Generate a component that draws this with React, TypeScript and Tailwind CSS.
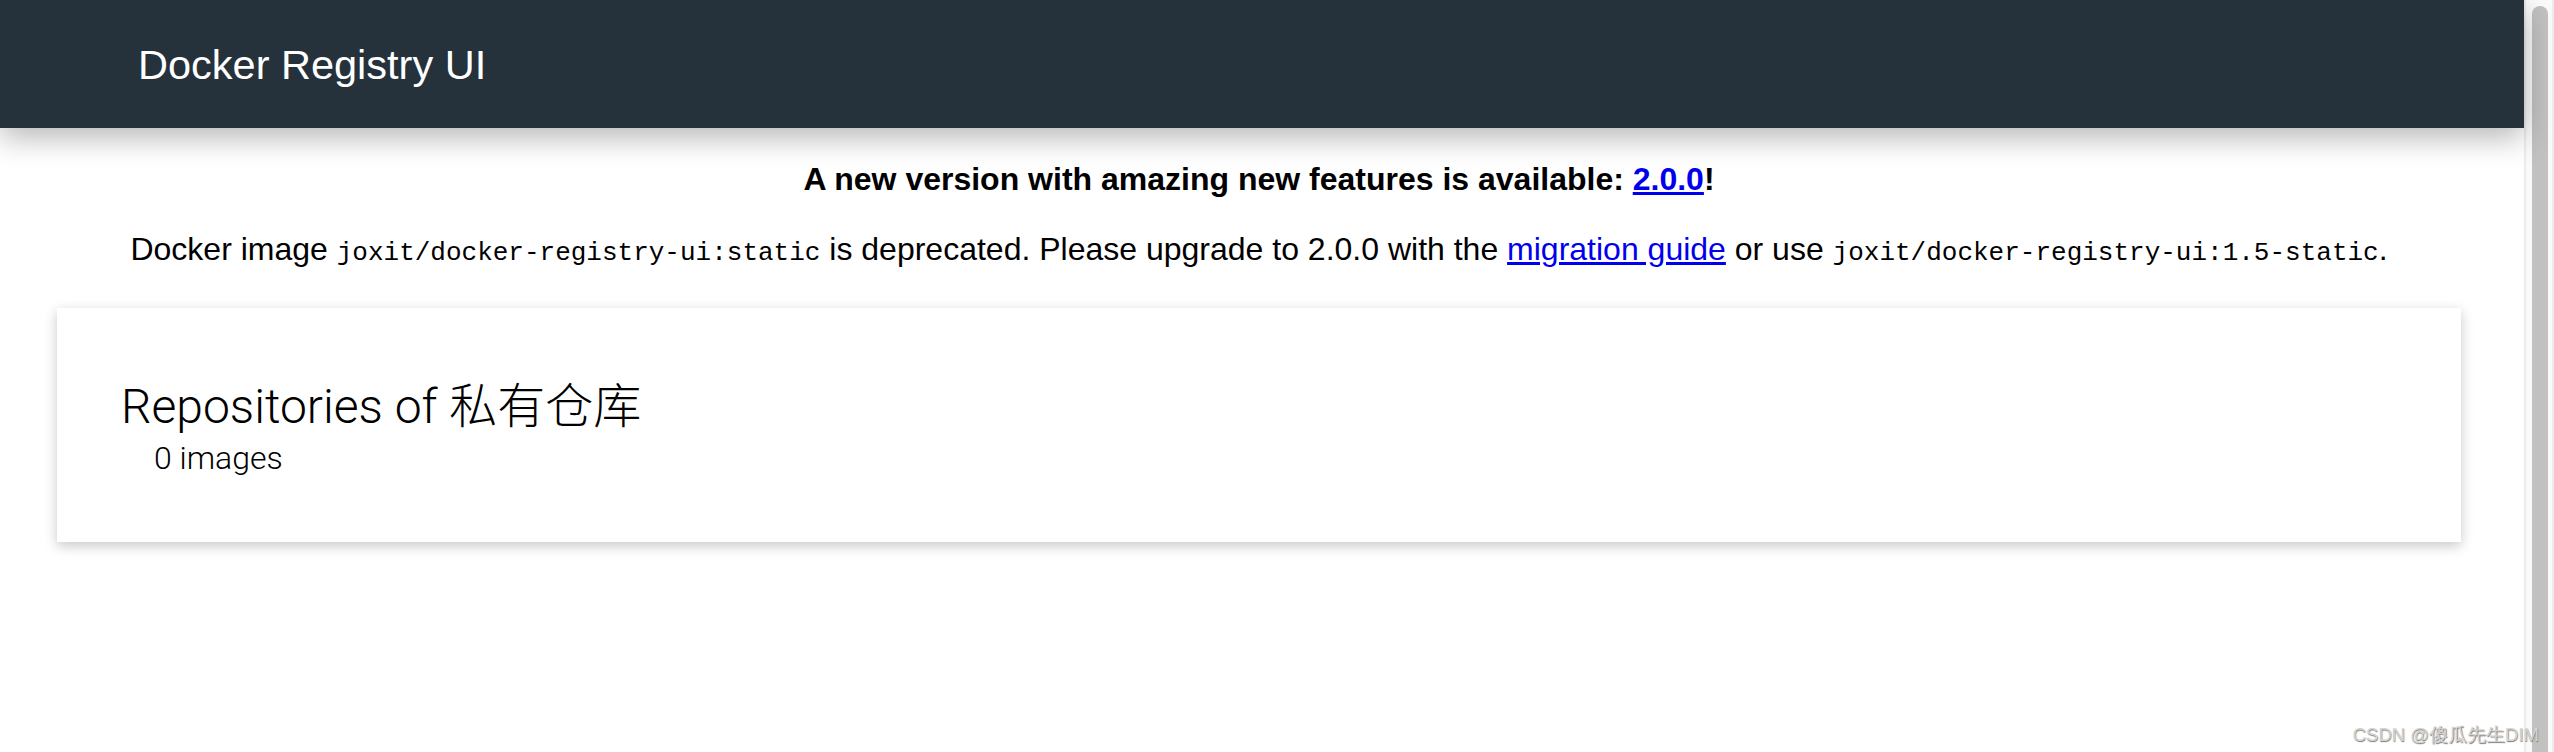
export default function App() {
  const sans = "font-['Liberation_Sans','Helvetica_Neue',Arial,sans-serif]";
  const mono = "font-['Liberation_Mono','Courier_New',monospace] text-[26px]";

  return (
    <div className="relative flex h-[752px] w-full overflow-hidden bg-white">
      {/* page */}
      <div className="flex min-w-0 flex-1 flex-col">
        <header className="relative z-10 h-[128px] bg-[#25313b] pl-[138px] pt-[41px] shadow-[0_10px_28px_rgba(0,0,0,0.28)]">
          <h1 className={`${sans} text-[41.5px] leading-[47px] text-white`}>Docker Registry UI</h1>
        </header>

        <main className="pl-[57px] pr-[63px]">
          <p className={`${sans} mt-[33px] text-center text-[32px] font-bold leading-[36px] text-black`}>
            A new version with amazing new features is available:{" "}
            <a href="#" className="text-[#0000ee] underline">
              2.0.0
            </a>
            !
          </p>
          <p className={`${sans} mt-[34px] text-center text-[32px] leading-[36px] text-black`}>
            Docker image <code className={mono}>joxit/docker-registry-ui:static</code> is deprecated. Please upgrade to
            2.0.0 with the{" "}
            <a href="#" className="text-[#0000ee] underline">
              migration guide
            </a>{" "}
            or use <code className={mono}>joxit/docker-registry-ui:1.5-static</code>.
          </p>

          <section className="mt-[37px] h-[234px] bg-white pl-[64px] pt-[71px] shadow-[0_4px_12px_rgba(0,0,0,0.22)]">
            <h2 className="font-['Roboto','Noto_Sans_CJK_SC',sans-serif] text-[48px] font-light leading-[56px] text-black">
              Repositories of 私有仓库
            </h2>
            <div className="mt-[4px] pl-[33px] font-['Roboto',sans-serif] text-[32px] font-light leading-[38px] text-black">
              0 images
            </div>
          </section>
        </main>
      </div>

      {/* scrollbar */}
      <div className="flex w-[30px] shrink-0 border-l-2 border-r-2 border-[#ececec] bg-[#fafafa] pl-[6px] pt-[6px]">
        <div className="h-full w-[16px] rounded-t-full bg-[#c1c1c1]" />
      </div>

      {/* watermark */}
      <div
        className={`${sans} absolute bottom-[8px] right-[15px] text-[18.5px] leading-none text-[#d4d4d4] [text-shadow:0.5px_0.5px_1px_#777]`}
      >
        CSDN @傻瓜先生DIM
      </div>
    </div>
  );
}
